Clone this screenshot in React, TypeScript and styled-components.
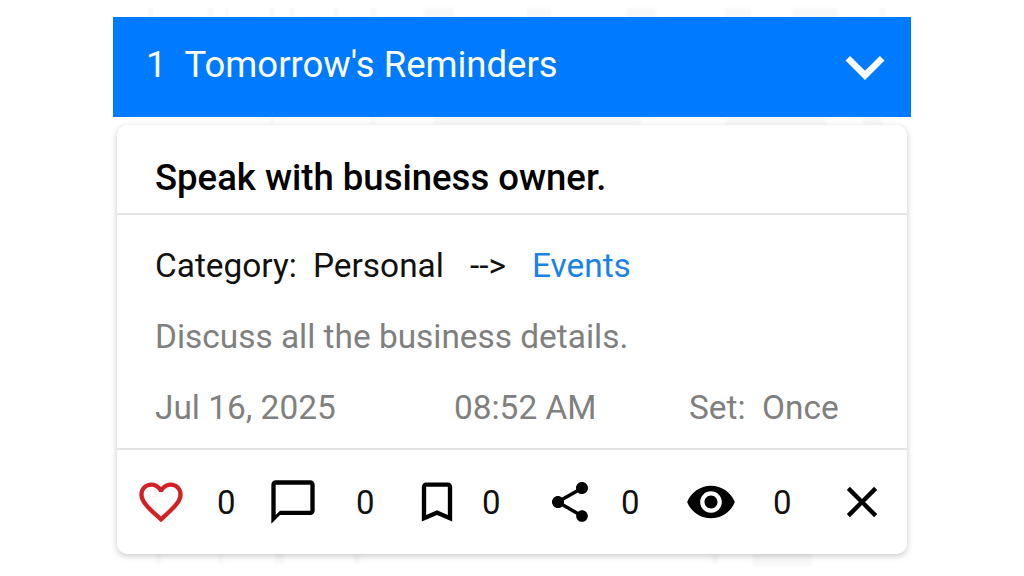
import React from "react";
import styled, { createGlobalStyle } from "styled-components";
import {
  MdFavoriteBorder,
  MdChatBubbleOutline,
  MdBookmarkBorder,
  MdShare,
  MdVisibility,
  MdClose,
  MdExpandMore,
} from "react-icons/md";

const GlobalStyle = createGlobalStyle`
  html, body {
    margin: 0;
    padding: 0;
    background: #fff;
    font-family: Roboto, "Liberation Sans", sans-serif;
  }
`;

const Page = styled.div`
  position: relative;
  width: 1024px;
  height: 576px;
  overflow: hidden;
  box-sizing: border-box;
  padding: 17px 113px 0;
`;

const Watermark = styled.svg`
  position: absolute;
  inset: 0;
  filter: blur(1.5px);
`;

const Header = styled.div`
  position: relative;
  height: 100px;
  background: #007bff;
  color: #fff;
  display: flex;
  align-items: center;
  justify-content: space-between;
  padding: 0 7px 0 33px;
  font-size: 36.5px;
  line-height: 1;
`;

const HeaderTitle = styled.div`
  display: flex;
  gap: 18px;
  margin-top: -4px;
`;

const Chevron = styled(MdExpandMore)`
  display: block;
`;

const Card = styled.div`
  position: relative;
  margin: 8px 4px 0;
  height: 429px;
  background: #fff;
  border-radius: 10px;
  box-shadow: 0 2px 6px rgba(0, 0, 0, 0.22);
  display: flex;
  flex-direction: column;
`;

const Title = styled.div`
  height: 90px;
  box-sizing: border-box;
  padding: 33px 38px 0;
  font-size: 36.5px;
  line-height: 39px;
  font-weight: 500;
  color: #000;
  border-bottom: 2px solid #e4e4e4;
`;

const Body = styled.div`
  height: 235px;
  box-sizing: border-box;
  padding: 31px 38px 0;
  border-bottom: 2px solid #e4e4e4;
  font-size: 33.4px;
  line-height: 39px;
`;

const CategoryRow = styled.div`
  display: flex;
  color: #111;
`;

const CategoryPart = styled.span<{ $width: number; $blue?: boolean }>`
  width: ${(p) => p.$width}px;
  white-space: pre;
  color: ${(p) => (p.$blue ? "#1a82e8" : "inherit")};
`;

const Description = styled.div`
  margin-top: 32px;
  color: #808080;
`;

const MetaRow = styled.div`
  margin-top: 32px;
  display: grid;
  grid-template-columns: 299px 235px auto;
  color: #808080;
  white-space: pre;
`;

const Footer = styled.div`
  flex: 1;
  display: grid;
  grid-template-columns: 132px 144px 133px 141px 151px 52px;
  align-items: center;
  padding: 0 0 0 18px;
`;

const Stat = styled.div<{ $gap: number }>`
  display: flex;
  align-items: center;
  gap: ${(p) => p.$gap}px;
  font-size: 33px;
  line-height: 1;
  color: #111;

  svg {
    display: block;
    flex: none;
    color: #000;
  }
`;

const ShareIcon = styled(MdShare)`
  margin: 0 2px;
`;

const Heart = styled(MdFavoriteBorder)`
  && {
    color: #d32027;
  }
`;

const marks: [number, number, number, number][] = [
  [148, 8, 5, 10], [208, 8, 5, 10], [225, 8, 4, 10], [269, 8, 5, 10], [290, 8, 4, 10],
  [334, 8, 5, 10], [371, 8, 5, 10], [424, 8, 30, 10], [527, 8, 24, 10], [627, 8, 29, 10],
  [725, 8, 26, 10], [792, 8, 45, 10], [880, 8, 5, 10],
  [269, 117, 5, 9], [371, 117, 5, 9], [434, 117, 207, 9], [725, 117, 102, 9], [863, 117, 20, 9],
  [156, 554, 5, 10], [218, 554, 5, 10], [275, 554, 9, 10], [354, 554, 6, 10], [712, 554, 6, 10],
  [753, 554, 59, 12],
];

export default function App() {
  return (
    <Page>
      <GlobalStyle />
      <Watermark width="1024" height="576" viewBox="0 0 1024 576" aria-hidden="true">
        {marks.map(([x, y, w, h]) => (
          <rect key={`${x}-${y}`} x={x} y={y} width={w} height={h} fill="#f8f8f8" />
        ))}
      </Watermark>
      <Header>
        <HeaderTitle>
          <span>1</span>
          <span>Tomorrow's Reminders</span>
        </HeaderTitle>
        <Chevron size={78} />
      </Header>
      <Card>
        <Title>Speak with business owner.</Title>
        <Body>
          <CategoryRow>
            <CategoryPart $width={158}>Category:</CategoryPart>
            <CategoryPart $width={157}>Personal</CategoryPart>
            <CategoryPart $width={62}>--&gt;</CategoryPart>
            <CategoryPart $width={110} $blue>Events</CategoryPart>
          </CategoryRow>
          <Description>Discuss all the business details.</Description>
          <MetaRow>
            <span>Jul 16, 2025</span>
            <span>08:52 AM</span>
            <span>Set:  Once</span>
          </MetaRow>
        </Body>
        <Footer>
          <Stat $gap={30}><Heart size={52} /><span>0</span></Stat>
          <Stat $gap={37}><MdChatBubbleOutline size={52} /><span>0</span></Stat>
          <Stat $gap={19}><MdBookmarkBorder size={52} /><span>0</span></Stat>
          <Stat $gap={25}><ShareIcon size={48} /><span>0</span></Stat>
          <Stat $gap={36}><MdVisibility size={52} /><span>0</span></Stat>
          <Stat $gap={0}><MdClose size={52} /></Stat>
        </Footer>
      </Card>
    </Page>
  );
}
